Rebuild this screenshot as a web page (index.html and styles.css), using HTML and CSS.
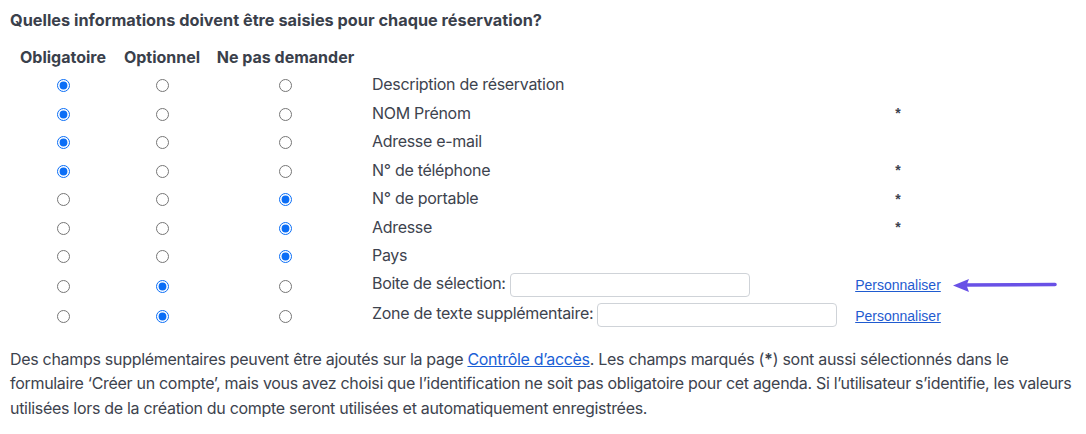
FILE: index.html
```html
<!DOCTYPE html>
<html lang="fr">
<head>
<meta charset="utf-8">
<title>Champs de réservation</title>
<link rel="stylesheet" href="styles.css">
</head>
<body>
<div class="page">
  <h3 class="title">Quelles informations doivent être saisies pour chaque réservation?</h3>
  <table class="fields">
    <thead>
      <tr>
        <th class="c1">Obligatoire</th>
        <th class="c2">Optionnel</th>
        <th class="c3">Ne pas demander</th>
        <th class="lbl"></th>
        <th class="extra"></th>
      </tr>
    </thead>
    <tbody>
      <tr>
        <td class="c1"><input type="radio" name="f1" checked></td>
        <td class="c2"><input type="radio" name="f1"></td>
        <td class="c3"><input type="radio" name="f1"></td>
        <td class="lbl">Description de réservation</td>
        <td class="extra"></td>
      </tr>
      <tr>
        <td class="c1"><input type="radio" name="f2" checked></td>
        <td class="c2"><input type="radio" name="f2"></td>
        <td class="c3"><input type="radio" name="f2"></td>
        <td class="lbl">NOM Prénom</td>
        <td class="extra"><span class="star">*</span></td>
      </tr>
      <tr>
        <td class="c1"><input type="radio" name="f3" checked></td>
        <td class="c2"><input type="radio" name="f3"></td>
        <td class="c3"><input type="radio" name="f3"></td>
        <td class="lbl">Adresse e-mail</td>
        <td class="extra"></td>
      </tr>
      <tr>
        <td class="c1"><input type="radio" name="f4" checked></td>
        <td class="c2"><input type="radio" name="f4"></td>
        <td class="c3"><input type="radio" name="f4"></td>
        <td class="lbl">N° de téléphone</td>
        <td class="extra"><span class="star">*</span></td>
      </tr>
      <tr>
        <td class="c1"><input type="radio" name="f5"></td>
        <td class="c2"><input type="radio" name="f5"></td>
        <td class="c3"><input type="radio" name="f5" checked></td>
        <td class="lbl">N° de portable</td>
        <td class="extra"><span class="star">*</span></td>
      </tr>
      <tr>
        <td class="c1"><input type="radio" name="f6"></td>
        <td class="c2"><input type="radio" name="f6"></td>
        <td class="c3"><input type="radio" name="f6" checked></td>
        <td class="lbl">Adresse</td>
        <td class="extra"><span class="star">*</span></td>
      </tr>
      <tr>
        <td class="c1"><input type="radio" name="f7"></td>
        <td class="c2"><input type="radio" name="f7"></td>
        <td class="c3"><input type="radio" name="f7" checked></td>
        <td class="lbl">Pays</td>
        <td class="extra"></td>
      </tr>
      <tr class="inrow">
        <td class="c1"><input type="radio" name="f8"></td>
        <td class="c2"><input type="radio" name="f8" checked></td>
        <td class="c3"><input type="radio" name="f8"></td>
        <td class="lbl">Boite de sélection: <input type="text" class="txt"></td>
        <td class="extra">
          <a href="#" class="custom">Personnaliser</a>
          <svg class="arrow" width="106" height="16" viewBox="0 0 106 16" aria-hidden="true">
            <line x1="12" y1="8" x2="102" y2="7.5" stroke="#6951e6" stroke-width="3.6" stroke-linecap="round"/>
            <path d="M0 8.5 L16 2 L13.5 8.3 L16 15 Z" fill="#6951e6"/>
          </svg>
        </td>
      </tr>
      <tr class="inrow">
        <td class="c1"><input type="radio" name="f9"></td>
        <td class="c2"><input type="radio" name="f9" checked></td>
        <td class="c3"><input type="radio" name="f9"></td>
        <td class="lbl">Zone de texte supplémentaire: <input type="text" class="txt"></td>
        <td class="extra"><a href="#" class="custom">Personnaliser</a></td>
      </tr>
    </tbody>
  </table>
  <p class="note">Des champs supplémentaires peuvent être ajoutés sur la page <a href="#" class="link">Contrôle d’accès</a>. Les champs marqués (<b>*</b>) sont aussi sélectionnés dans le<br>formulaire ‘Créer un compte’, mais vous avez choisi que l’identification ne soit pas obligatoire pour cet agenda. Si l’utilisateur s’identifie, les valeurs<br>utilisées lors de la création du compte seront utilisées et automatiquement enregistrées.</p>
</div>
</body>
</html>
```

FILE: styles.css
```css
html, body {
  margin: 0;
  padding: 0;
  background: #ffffff;
}

body {
  font-family: Inter, "Noto Sans", "Liberation Sans", sans-serif;
  font-size: 16px;
  letter-spacing: -0.3px;
  color: #3d434e;
}

.page {
  padding: 10px 10px 0 10px;
}

.title {
  margin: 0;
  font-size: 16.3px;
  font-weight: 700;
  line-height: 20px;
  letter-spacing: 0;
  color: #3a404b;
}

.fields {
  border-collapse: collapse;
  margin: 17px 0 0 1px;
}

.fields th {
  font-weight: 700;
  letter-spacing: 0;
  color: #3a404b;
  text-align: center;
  padding: 0;
  height: 20px;
  line-height: 20px;
  white-space: nowrap;
}

.fields thead tr th {
  padding-bottom: 3px;
}

.fields td {
  padding: 0;
  height: 28.5px;
  line-height: 20px;
  vertical-align: middle;
  white-space: nowrap;
}

.fields .inrow td {
  height: 30.5px;
}

.c1 { width: 104px; text-align: center; }
.c2 { width: 94px; text-align: center; }
.c3 { width: 153px; text-align: center; }

.fields td.lbl,
.fields th.lbl {
  width: 478px;
  padding-left: 10px;
  text-align: left;
}

.extra {
  width: 96px;
  text-align: center;
  position: relative;
}

.fields input[type="radio"] {
  width: 13px;
  height: 13px;
  margin: 0;
  vertical-align: middle;
  accent-color: #0b6ef6;
}

.txt {
  box-sizing: border-box;
  width: 240px;
  height: 24px;
  margin: 0;
  padding: 2px 6px;
  border: 1px solid #cfd3d8;
  border-radius: 4px;
  vertical-align: middle;
  font-family: inherit;
  font-size: 14px;
}

.star {
  font-family: "Liberation Sans", Arial, sans-serif;
  font-weight: 700;
  font-size: 14px;
  letter-spacing: 0;
  color: #3d434e;
}

.custom {
  font-family: "Liberation Sans", Arial, sans-serif;
  font-size: 14px;
  letter-spacing: 0;
  color: #1f5bd0;
  text-decoration: underline;
}

.arrow {
  position: absolute;
  left: calc(100% + 7px);
  top: 50%;
  margin-top: -8px;
}

.note {
  margin: 16px 0 0 0;
  line-height: 24.5px;
}

.link {
  color: #1a5fd6;
  text-decoration: underline;
}

.note b {
  font-weight: 700;
}
```
